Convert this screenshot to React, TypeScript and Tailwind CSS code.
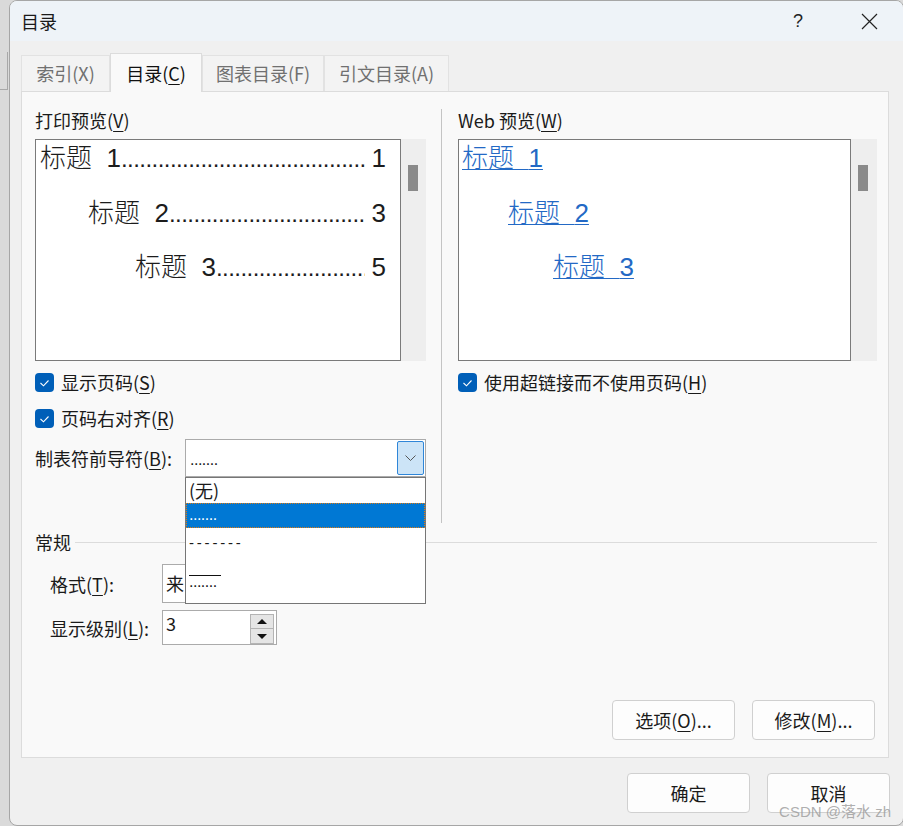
import React from "react";

const U = ({ children }: { children: React.ReactNode }) => (
  <span className="underline underline-offset-[3px] decoration-1">{children}</span>
);

function Check() {
  return (
    <span className="w-[19px] h-[19px] rounded-[4px] bg-[#005fb8] flex items-center justify-center shrink-0">
      <svg width="11" height="8" viewBox="0 0 11 8">
        <path d="M1.5 4l3 2.8 5-5.3" stroke="white" strokeWidth="1.1" fill="none" />
      </svg>
    </span>
  );
}

function Scrollbar() {
  return (
    <div className="w-[26px] h-[222px] bg-[#eeeeee] pt-[26px] pl-[7px]">
      <div className="w-[10px] h-[26px] bg-[#8a8a8a]" />
    </div>
  );
}

function PrintRow({ indent, n, p }: { indent: string; n: string; p: string }) {
  return (
    <div
      className={`h-[30px] flex items-baseline leading-[30px] text-[26px] text-[#1c1c1c] font-['Liberation_Sans','Noto_Sans_CJK_SC',sans-serif] font-light whitespace-nowrap ${indent}`}
    >
      <span>标题{"\u00a0\u00a0"}{n}</span>
      <span className="flex-1 min-w-0 mr-[7px] overflow-hidden whitespace-nowrap text-[24px] tracking-[-0.55px]">
        ..............................................................................
      </span>
      <span>{p}</span>
    </div>
  );
}

function WebRow({ indent, n }: { indent: string; n: string }) {
  return (
    <div
      className={`h-[30px] leading-[30px] text-[26px] font-['Liberation_Sans','Noto_Sans_CJK_SC',sans-serif] font-light whitespace-nowrap ${indent}`}
    >
      <span className="text-[#2369c5] underline decoration-1 underline-offset-[2px] decoration-[#2369c5]">
        标题{"\u00a0\u00a0"}{n}
      </span>
    </div>
  );
}

function Tab({ label, active, w }: { label: React.ReactNode; active?: boolean; w: string }) {
  return active ? (
    <div
      className={`${w} h-[39px] -mb-px relative z-10 bg-[#f9f9f9] border border-b-0 border-[#dcdcdc] flex items-center justify-center text-[#111]`}
    >
      {label}
    </div>
  ) : (
    <div
      className={`${w} h-[36px] bg-[#f3f3f3] border border-b-0 border-[#e2e2e2] flex items-center justify-center text-[#707070]`}
    >
      {label}
    </div>
  );
}

function Btn({ children, w = "w-[123px]" }: { children: React.ReactNode; w?: string }) {
  return (
    <div
      className={`${w} h-[40px] rounded-[4px] border border-[#d0d0d0] bg-[#fdfdfd] flex items-center justify-center text-[18px] text-[#1a1a1a]`}
    >
      {children}
    </div>
  );
}

const DOTS = "font-['Liberation_Sans',sans-serif] text-[16px] tracking-[-0.5px] leading-none";

export default function App() {
  return (
    <div className="w-[903px] h-[826px] flex bg-[#dadada] overflow-hidden font-['Noto_Sans_CJK_SC',sans-serif] text-[18px] text-[#1a1a1a]">
      <div className="w-[9px] shrink-0 pt-[52px]">
        <div className="w-[8px] h-[38px] border-r border-b border-[#a8a8a8]" />
      </div>
      <div className="relative w-[895px] h-[826px] shrink-0 rounded-[8px] border border-[#a6a6a6] bg-[#f0f0f0] overflow-hidden flex flex-col">
        {/* Title bar */}
        <div className="h-[40px] bg-[#eef3f8] flex items-center pl-[11px] shrink-0">
          <span className="text-[18px] leading-none">目录</span>
          <span className="ml-auto text-[18px] leading-none text-[#222] mr-[58px] font-['Liberation_Sans',sans-serif]">?</span>
          <svg width="17" height="17" viewBox="0 0 17 17" className="mr-[25px]">
            <path d="M1 1l15 15M16 1L1 16" stroke="#222" strokeWidth="1.2" />
          </svg>
        </div>

        <div className="pl-[11px] pt-[12px]">
          {/* Tabs */}
          <div className="flex items-end h-[38px]">
            <Tab w="w-[89px]" label={<span>索引(X)</span>} />
            <Tab
              w="w-[92px]"
              active
              label={
                <span>
                  目录(<U>C</U>)
                </span>
              }
            />
            <Tab w="w-[122px]" label={<span>图表目录(F)</span>} />
            <Tab w="w-[125px]" label={<span>引文目录(A)</span>} />
          </div>

          {/* Panel */}
          <div className="w-[868px] h-[667px] bg-[#f9f9f9] border border-[#dcdcdc] flex flex-col pl-[13px] pr-[11px] pt-[17px]">
            <div className="flex">
              {/* Left column */}
              <div className="w-[391px]">
                <div className="leading-[20px] mt-px">
                  打印预览(<U>V</U>)
                </div>
                <div className="mt-[9px] flex">
                  <div className="w-[366px] h-[222px] bg-white border border-[#7a7a7a] pt-[3px] pl-[4px] pr-[14px] flex flex-col gap-[24.5px]">
                    <PrintRow indent="" n="1" p="1" />
                    <PrintRow indent="pl-[48px]" n="2" p="3" />
                    <PrintRow indent="pl-[95px]" n="3" p="5" />
                  </div>
                  <Scrollbar />
                </div>
                <div className="mt-[12px] h-[19px] flex items-center gap-[7px]">
                  <Check />
                  <span className="leading-[19px]">
                    显示页码(<U>S</U>)
                  </span>
                </div>
                <div className="mt-[17px] h-[19px] flex items-center gap-[7px]">
                  <Check />
                  <span className="leading-[19px]">
                    页码右对齐(<U>R</U>)
                  </span>
                </div>
                <div className="mt-[11px] flex items-center">
                  <span className="w-[150px] leading-[20px]">
                    制表符前导符(<U>B</U>):
                  </span>
                  <div className="relative w-[241px] h-[38px] bg-white border border-[#ababab] flex items-center pl-[4px] pr-[1px]">
                    <span className={`${DOTS} mt-[3px]`}>.......</span>
                    <div className="ml-auto w-[27px] h-[34px] bg-[#cce4f7] border border-[#2f86d8] rounded-[2px] flex items-center justify-center">
                      <svg width="11" height="6" viewBox="0 0 11 6">
                        <path d="M0.5 0.5l5 5 5-5" stroke="#555" strokeWidth="1" fill="none" />
                      </svg>
                    </div>
                    {/* Dropdown list */}
                    <div className="absolute left-[-1px] top-[37px] w-[241px] h-[127px] bg-white border border-[#767676] z-20 flex flex-col">
                      <div className="h-[24px] pl-[3px] flex items-center leading-none">(无)</div>
                      <div className="h-[25px] mt-px bg-[#0078d4] outline outline-1 outline-dotted outline-[#e07a10] -outline-offset-1 pl-[3px] flex items-end pb-[5px]">
                        <span className={`${DOTS} text-white`}>.......</span>
                      </div>
                      <div className="h-[24px] pl-[3px] flex items-center">
                        <span className="font-['Liberation_Sans',sans-serif] text-[15px] tracking-[2.8px] leading-none mt-[4px]">-------</span>
                      </div>
                      <div className="flex-1 pl-[3px] pt-[23px] flex flex-col">
                        <div className="w-[32px] h-px bg-[#111]" />
                        <span className={`${DOTS} -mt-[2px]`}>.......</span>
                      </div>
                    </div>
                  </div>
                </div>
              </div>

              {/* Divider */}
              <div className="ml-[15px] w-px h-[414px] bg-[#c4c4c4]" />

              {/* Right column */}
              <div className="ml-[16px] w-[419px]">
                <div className="leading-[20px] mt-px">
                  Web 预览(<U>W</U>)
                </div>
                <div className="mt-[9px] flex">
                  <div className="w-[393px] h-[222px] bg-white border border-[#7a7a7a] pt-[3px] pl-[3px] flex flex-col gap-[24.5px]">
                    <WebRow indent="" n="1" />
                    <WebRow indent="pl-[46px]" n="2" />
                    <WebRow indent="pl-[91px]" n="3" />
                  </div>
                  <Scrollbar />
                </div>
                <div className="mt-[12px] h-[19px] flex items-center gap-[7px]">
                  <Check />
                  <span className="leading-[19px]">
                    使用超链接而不使用页码(<U>H</U>)
                  </span>
                </div>
              </div>
            </div>

            {/* 常规 */}
            <div className="mt-[9px] h-[20px] flex items-center">
              <span className="leading-[20px]">常规</span>
              <div className="ml-[4px] flex-1 h-px bg-[#dcdcdc]" />
            </div>

            <div className="mt-[12px] pl-[15px] flex items-center">
              <span className="w-[112px] leading-[20px]">
                格式(<U>T</U>):
              </span>
              <div className="w-[263px] h-[39px] bg-white border border-[#ababab] flex items-center pl-[3px]">
                来自模板
              </div>
            </div>

            <div className="mt-[7px] pl-[15px] flex items-center">
              <span className="w-[112px] leading-[20px]">
                显示级别(<U>L</U>):
              </span>
              <div className="w-[115px] h-[35px] bg-white border border-[#ababab] flex pl-[3px] pt-[2px] pr-[2px]">
                <span className="leading-[20px]">3</span>
                <div className="ml-auto mt-px flex flex-col">
                  <div className="w-[24px] h-[15px] bg-[#e5e5e5] border border-[#b4b4b4] flex items-center justify-center">
                    <svg width="10" height="5" viewBox="0 0 10 5">
                      <path d="M0 5L5 0L10 5Z" fill="#111" />
                    </svg>
                  </div>
                  <div className="w-[24px] h-[15px] bg-[#e5e5e5] border border-t-0 border-[#b4b4b4] flex items-center justify-center">
                    <svg width="10" height="5" viewBox="0 0 10 5">
                      <path d="M0 0L5 5L10 0Z" fill="#111" />
                    </svg>
                  </div>
                </div>
              </div>
            </div>

            <div className="mt-auto mb-[17px] flex justify-end gap-[17px] pr-[2px]">
              <Btn>
                选项(<U>O</U>)...
              </Btn>
              <Btn>
                修改(<U>M</U>)...
              </Btn>
            </div>
          </div>
        </div>

        {/* Bottom buttons */}
        <div className="mt-[15px] flex justify-end gap-[17px] pr-[13px]">
          <Btn>确定</Btn>
          <Btn>取消</Btn>
        </div>

        <span className="absolute right-[12px] bottom-[6px] text-[15px] leading-none text-[#9a9a9a]/80 font-['Liberation_Sans','Noto_Sans_CJK_SC',sans-serif] z-30">
          CSDN @落水 zh
        </span>
      </div>
    </div>
  );
}
